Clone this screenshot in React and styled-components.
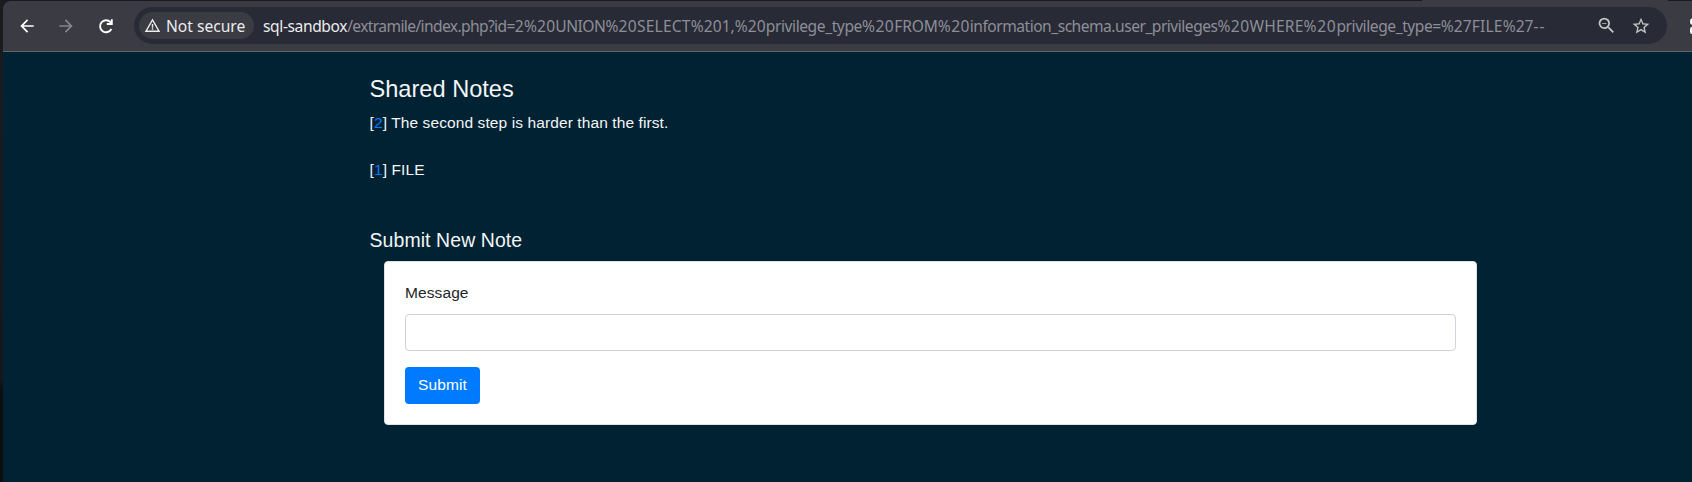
import React from 'react';
import styled, { createGlobalStyle } from 'styled-components';
import { MdArrowBack, MdArrowForward, MdStarBorder, MdWarningAmber, MdOutlineZoomOut } from 'react-icons/md';

const Global = createGlobalStyle`
  * { box-sizing: border-box; }
  html, body { margin: 0; height: 100%; overflow: hidden; }
  body { background: linear-gradient(#1b1c20 0, #16171a 380px, #0d0e10 390px); }
`;

const TabStrip = styled.div`
  display: flex;
  height: 1px;
  padding-left: 1422px;
  background: #171923;
`;

const ActiveTab = styled.div`
  width: 246px;
  background: #3a3b43;
`;

const Window = styled.div`
  width: 1689px;
  height: 481px;
  margin-left: 3px;
  border-top-left-radius: 8px;
  overflow: hidden;
  background: #002233;
`;

const Toolbar = styled.div`
  height: 51px;
  display: flex;
  align-items: center;
  padding: 0 0 1px 13px;
  background: #3a3b43;
  border-bottom: 1px solid #62636c;
  overflow: hidden;
`;

const IconButton = styled.span`
  flex: none;
  display: flex;
  align-items: center;
  justify-content: center;
  width: 22px;
  height: 22px;
  margin-right: ${(p) => p.$gap || 0}px;
  color: ${(p) => p.$color || '#ffffff'};
`;

const Omnibox = styled.div`
  flex: none;
  display: flex;
  align-items: center;
  width: 1533px;
  height: 37px;
  margin-right: 21px;
  padding: 0 15px 0 5px;
  border-radius: 19px;
  background: #282a36;
  font: 15.6px/22px 'Noto Sans', sans-serif;
  color: #8d8f98;
  white-space: nowrap;
`;

const SecurityChip = styled.span`
  flex: none;
  display: flex;
  align-items: center;
  gap: 5px;
  width: 115px;
  height: 27px;
  margin-right: 9px;
  padding-left: 5px;
  border-radius: 14px;
  background: #3a3b43;
  color: #ececee;
`;

const Host = styled.span`
  color: #ececee;
  letter-spacing: -0.4px;
`;

const Path = styled.span`
  flex: 1;
`;

const Run = styled.span`
  letter-spacing: ${(p) => p.$track}px;
`;

const Page = styled.main`
  width: 1107px;
  margin-left: 366.5px;
  padding-top: 23px;
  font: 15.5px/23.25px 'Liberation Sans', Arial, sans-serif;
  letter-spacing: 0.1px;
  color: #f3f5f6;
`;

const Title = styled.h1`
  margin: 0 0 8px;
  font-size: 23.6px;
  line-height: 28px;
  font-weight: 400;
  letter-spacing: 0;
`;

const Note = styled.p`
  margin: 0 0 23.5px;
`;

const NoteLink = styled.a`
  color: #007bff;
  text-decoration: none;
`;

const Subtitle = styled.h2`
  margin: 48px 0 9px;
  font-size: 19.45px;
  line-height: 23px;
  font-weight: 400;
`;

const Card = styled.form`
  width: 1093px;
  height: 164px;
  margin-left: 14.5px;
  padding: 20px;
  display: flex;
  flex-direction: column;
  align-items: flex-start;
  border: 1px solid #dfe3e6;
  border-radius: 4px;
  background: #ffffff;
`;

const Label = styled.label`
  margin-bottom: 10px;
  line-height: 22px;
  color: #212529;
`;

const Field = styled.input`
  flex: none;
  width: 100%;
  height: 37px;
  margin: 0 0 16px;
  border: 1px solid #ced4da;
  border-radius: 4px;
  background: #ffffff;
`;

const Submit = styled.button`
  flex: none;
  width: 75px;
  height: 37px;
  padding: 0 0 1px;
  border: 0;
  border-radius: 4px;
  background: #007bff;
  color: #ffffff;
  font: inherit;
  letter-spacing: inherit;
`;

const URL_RUNS = [
  ['/extramile/index.php?id=', -0.62],
  ['2%20', 0.2],
  ['UNION', -0.5],
  ['%20', 0.23],
  ['SELECT', 0.2],
  ['%201,%20', 0.04],
  ['privilege_type', -0.42],
  ['%20', 0.5],
  ['FROM', -0.15],
  ['%20', 0.4],
  ['information_schema.user_privileges', -0.5],
  ['%20', 0.4],
  ['WHERE', 0.18],
  ['%20', 0.7],
  ['privilege_type=', -0.44],
  ['%27', 0],
  ['FILE', 0.2],
  ['%27', 0],
  ['--', 1],
];

const Svg = ({ children }) => (
  <svg width="20" height="20" viewBox="0 0 20 20" fill="none" stroke="currentColor" strokeWidth="1.9">
    {children}
  </svg>
);

export default function App() {
  return (
    <>
      <Global />
      <TabStrip><ActiveTab /></TabStrip>
      <Window>
        <Toolbar>
          <IconButton $gap={17}><MdArrowBack size={20} /></IconButton>
          <IconButton $gap={18} $color="#85868c"><MdArrowForward size={20} /></IconButton>
          <IconButton $gap={17}><Svg><path d="M15.4 13A6 6 0 1 1 14.4 6L16 7.8M15.8 3.2V8H10.8" /></Svg></IconButton>
          <Omnibox>
            <SecurityChip>
              <MdWarningAmber size={17} />
              <span>Not secure</span>
            </SecurityChip>
            <Host>sql-sandbox</Host>
            <Path>
              {URL_RUNS.map(([text, track], i) => <Run key={i} $track={track}>{text}</Run>)}
            </Path>
            <IconButton $gap={13} $color="#c4c5c7"><MdOutlineZoomOut size={21} /></IconButton>
            <IconButton $color="#c4c5c7"><MdStarBorder size={20} /></IconButton>
          </Omnibox>
          <IconButton>
            <Svg><rect x="2" y="3" width="5" height="5" rx="2" /><rect x="2" y="12" width="5" height="5" rx="1" /></Svg>
          </IconButton>
        </Toolbar>
        <Page>
          <Title>Shared Notes</Title>
          <Note>[<NoteLink>2</NoteLink>] The second step is harder than the first.</Note>
          <Note>[<NoteLink>1</NoteLink>] FILE</Note>
          <Subtitle>Submit New Note</Subtitle>
          <Card>
            <Label htmlFor="message">Message</Label>
            <Field id="message" type="text" />
            <Submit type="button">Submit</Submit>
          </Card>
        </Page>
      </Window>
    </>
  );
}
